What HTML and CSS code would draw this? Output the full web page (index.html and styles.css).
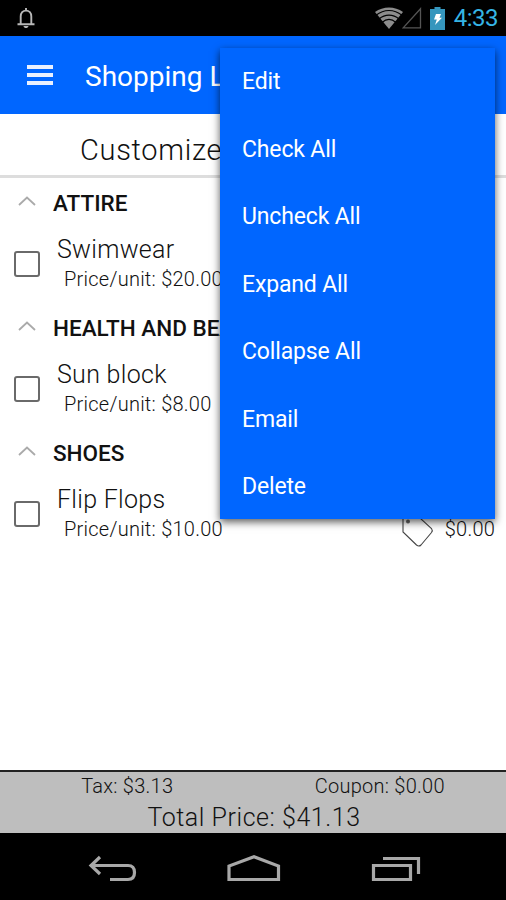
FILE: index.html
```
<!DOCTYPE html>
<html>
<head>
  <meta charset="UTF-8">
  <title>Shopping List</title>
  <link rel="stylesheet" href="styles.css">
</head>
<body>
<div class="status">
  <svg class="bell" width="18" height="22" viewBox="0 0 18 22">
    <path d="M9 1v3M3.700 17V9.500C3.700 6 5.800 3.600 9 3.600s5.300 2.400 5.300 5.900V17M.5 17.200h17" fill="none" stroke="#b8b8b8" stroke-width="1.900"/>
    <path d="M6.500 19h5c-.4 1.500-1.200 2-2.500 2s-2.200-.5-2.500-2z" fill="#b8b8b8"/>
  </svg>
  <svg class="wifi" width="28" height="22" viewBox="0 0 28 22">
    <path d="M0 5C8-1 20-1 28 5L14 22z" fill="#8c8c8c"/>
    <path d="M1 8.300C9 1.800 19 1.800 27 8.300M4 12C10 6.800 18 6.800 24 12M7 15.500C11.500 11.500 16.500 11.500 21 15.500" fill="none" stroke="#000" stroke-width="1.100"/>
  </svg>
  <svg class="signal" width="20" height="22" viewBox="0 0 20 22">
    <path d="M18.500 1.800v19H1.200z" fill="none" stroke="#555" stroke-width="1.300"/>
  </svg>
  <svg class="battery" width="15" height="23" viewBox="0 0 15 23">
    <path d="M4.500 0h6v2H15v21H0V2h4.500z" fill="#3596bd"/>
    <path d="M6 7h5L9.500 10.800H12L5 18l1.800-5.500H4z" fill="#fff"/>
  </svg>
  <span class="clock">4:33</span>
</div>
<div class="header">
  <div class="burger"><i></i><i></i><i></i></div>
  <h1>Shopping List</h1>
</div>
<div class="title">Customize</div>
<div class="list">
  <div class="group">
    <div class="category">
      <svg width="18" height="10" viewBox="0 0 18 10"><path d="M1 9l8-7.500L17 9"/></svg>
      <h2>ATTIRE</h2>
    </div>
    <div class="item">
      <span class="box"></span>
      <div class="info">
        <div class="name">Swimwear</div>
        <div class="price">Price/unit: $20.00</div>
      </div>
    </div>
  </div>
  <div class="group">
    <div class="category">
      <svg width="18" height="10" viewBox="0 0 18 10"><path d="M1 9l8-7.500L17 9"/></svg>
      <h2>HEALTH AND BEAUTY</h2>
    </div>
    <div class="item">
      <span class="box"></span>
      <div class="info">
        <div class="name">Sun block</div>
        <div class="price">Price/unit: $8.00</div>
      </div>
    </div>
  </div>
  <div class="group">
    <div class="category">
      <svg width="18" height="10" viewBox="0 0 18 10"><path d="M1 9l8-7.500L17 9"/></svg>
      <h2>SHOES</h2>
    </div>
    <div class="item">
      <span class="box"></span>
      <div class="info">
        <div class="name">Flip Flops</div>
        <div class="price">Price/unit: $10.00</div>
      </div>
      <div class="coupon">
        <svg width="32" height="32" viewBox="0 0 32 32">
          <path d="M1 1H17L29.500 12.500Q31 14.500 29.500 16.500L19 29Q17 31 14.500 29L1 16z" fill="none" stroke="#444" stroke-width="1.100"/>
          <circle cx="6" cy="5.500" r="2" fill="#666"/>
        </svg>
        <span>$0.00</span>
      </div>
    </div>
  </div>
</div>
<div class="totals">
  <div class="extras">
    <span>Tax: $3.13</span>
    <span>Coupon: $0.00</span>
  </div>
  <div class="total">Total Price: $41.13</div>
</div>
<div class="nav">
  <svg width="50" height="30" viewBox="0 0 50 30">
    <path d="M12 2L3 10.500 12 19M3 10.500H40Q46.500 10.500 46.500 17.500T40 24.500H22"/>
  </svg>
  <svg width="56" height="30" viewBox="0 0 56 30">
    <path d="M3 24.500V11L28 1.800 52.500 11V24.500z"/>
  </svg>
  <svg width="52" height="30" viewBox="0 0 52 30">
    <path d="M3.500 10.500H40.500V24.500H3.500zM13 3.500H48.500V19"/>
  </svg>
</div>
<ul class="menu">
  <li>Edit</li>
  <li>Check All</li>
  <li>Uncheck All</li>
  <li>Expand All</li>
  <li>Collapse All</li>
  <li>Email</li>
  <li>Delete</li>
</ul>
</body>
</html>
```
FILE: styles.css
```
* {
  box-sizing: border-box;
}

body {
  margin: 0;
  height: 900px;
  display: flex;
  flex-direction: column;
  overflow: hidden;
  background: #fff;
  color: #111;
  font-family: Roboto, "Liberation Sans", sans-serif;
  white-space: nowrap;
}

h1, h2 {
  margin: 0;
}

.status {
  height: 36px;
  padding: 0 8px 0 17px;
  display: flex;
  align-items: center;
  background: #000;
}

.bell {
  margin-right: auto;
}

.wifi {
  margin-right: -1px;
}

.signal {
  margin-right: 8px;
}

.battery {
  margin-right: 9px;
}

.clock {
  color: #35b5e5;
  font-size: 24px;
  letter-spacing: -.5px;
}

.header {
  height: 78px;
  padding: 2px 0 0 27px;
  display: flex;
  align-items: center;
  background: #06f;
  color: #fff;
}

.burger {
  width: 26px;
  margin: -3px 32px 0 0;
  display: grid;
  gap: 4px;
}

.burger i {
  height: 4px;
  background: #e9f0ff;
}

.header h1 {
  font-size: 28px;
  font-weight: 400;
}

.title {
  height: 64px;
  padding: 4px 0 0 80px;
  border-bottom: 3px solid #ddd;
  font-size: 29px;
  font-weight: 350;
  line-height: 64px;
  letter-spacing: .7px;
}

.list {
  flex: 1;
}

.group {
  height: 125.2px;
}

.category {
  height: 49px;
  padding-left: 18px;
  display: flex;
  align-items: center;
}

.category svg {
  margin: -4px 17px 0 0;
  fill: none;
  stroke: #aaa;
  stroke-width: 1.8;
}

.category h2 {
  font-size: 22.5px;
  font-weight: 550;
}

.item {
  padding: 6px 11px 0 14px;
  display: flex;
}

.box {
  width: 26px;
  height: 26px;
  margin: 18px 17px 0 0;
  border: 2px solid #6a6a6a;
  border-radius: 3px;
}

.name {
  padding-top: 1px;
  font-size: 25px;
  font-weight: 350;
  line-height: 31px;
  letter-spacing: .3px;
}

.price {
  padding-left: 7px;
  font-size: 20px;
  font-weight: 350;
  line-height: 28px;
  letter-spacing: .25px;
}

.coupon {
  margin: 27px 0 0 auto;
  display: flex;
  align-items: center;
  font-size: 20px;
  font-weight: 350;
  line-height: 28px;
  letter-spacing: .2px;
}

.coupon svg {
  margin: 6px 11px 0 0;
}

.totals {
  height: 63px;
  border-top: 2px solid #222;
  background: #bebebe;
  font-weight: 350;
  text-align: center;
}

.extras {
  height: 29px;
  padding: 0 0 0 1px;
  display: grid;
  grid-template-columns: 1fr 1fr;
  font-size: 20px;
  line-height: 29px;
  letter-spacing: .25px;
}

.total {
  padding-left: 2px;
  font-size: 25px;
  line-height: 33px;
  letter-spacing: .55px;
}

.nav {
  height: 67px;
  padding: 6px 84px 0 88px;
  display: flex;
  align-items: center;
  justify-content: space-between;
  background: #000;
}

.nav svg {
  fill: none;
  stroke: #a8a8a8;
  stroke-width: 3.2;
}

.menu {
  position: absolute;
  top: 48px;
  left: 220px;
  width: 275px;
  height: 471px;
  margin: 0;
  padding: 0 0 0 22px;
  list-style: none;
  background: #06f;
  color: #fff;
  font-size: 23px;
  line-height: 67.5px;
  letter-spacing: -.15px;
  box-shadow: 0 3px 8px rgba(0, 0, 0, .65);
}
```
